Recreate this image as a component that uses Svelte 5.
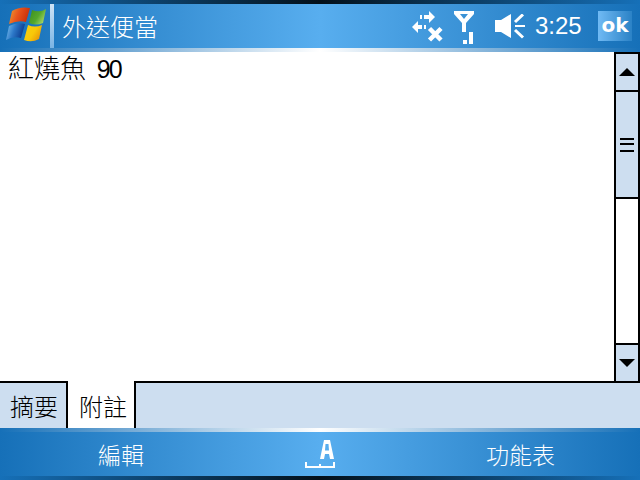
<script lang="ts">
  let note = '紅燒魚';
  let price = '90';
  let tabs = [
    { label: '摘要', active: false },
    { label: '附註', active: true }
  ];
</script>

<div class="screen">
  <header class="topbar">
    <div class="edge dark"></div>
    <div class="bar">
      <svg class="flag" width="42" height="40" viewBox="0 0 42 40">
        <defs>
          <linearGradient id="fr" x1="0" y1="0" x2="1" y2="0.3">
            <stop offset="0" stop-color="#f0a030" />
            <stop offset="0.5" stop-color="#e8541c" />
            <stop offset="1" stop-color="#c8300c" />
          </linearGradient>
          <linearGradient id="fg" x1="0" y1="0" x2="1" y2="0.6">
            <stop offset="0" stop-color="#3c8c1c" />
            <stop offset="0.6" stop-color="#54a82c" />
            <stop offset="1" stop-color="#a4d464" />
          </linearGradient>
          <linearGradient id="fb" x1="0" y1="0" x2="1" y2="0.3">
            <stop offset="0" stop-color="#80c4f0" />
            <stop offset="0.5" stop-color="#2c78c8" />
            <stop offset="1" stop-color="#0c3c90" />
          </linearGradient>
          <linearGradient id="fy" x1="0" y1="0" x2="1" y2="0.6">
            <stop offset="0" stop-color="#f8d010" />
            <stop offset="0.6" stop-color="#f8c808" />
            <stop offset="1" stop-color="#e89808" />
          </linearGradient>
        </defs>
        <path d="M6 5 Q14 0 24 2 L20 16 Q12 14 3 18 Z" fill="url(#fr)" />
        <path d="M26 4 Q34 7 40 3 L37 17 Q30 20 23 17 Z" fill="url(#fg)" />
        <path d="M3 20 Q11 16 19 18 L15 32 Q7 30 0 34 Z" fill="url(#fb)" />
        <path d="M22 19 Q29 22 36 19 L33 33 Q26 37 18 34 Z" fill="url(#fy)" />
      </svg>
      <div class="divider"></div>
      <span class="title">外送便當</span>
      <div class="status">
        <svg class="connect" width="32" height="32" viewBox="0 0 32 32">
          <g fill="#fff">
            <rect x="8" y="4" width="2" height="4" />
            <rect x="12" y="4" width="5" height="4" />
            <path d="M17 0 L23 6 L17 12 Z" />
            <path d="M0 16 L6 10 L6 22 Z" />
            <rect x="5" y="14" width="5" height="4" />
            <rect x="12" y="14" width="2" height="4" />
          </g>
          <path d="M17.500 17.500 L29 29 M29 17.500 L17.500 29" stroke="#fff" stroke-width="4.500" fill="none" />
        </svg>
        <svg class="antenna" width="20" height="34" viewBox="0 0 20 34">
          <path fill="#fff" fill-rule="evenodd" d="M0 0H20V3L12 12V21H8V12L0 3ZM6 3L10 8L14 3Z" />
          <rect x="9" y="29" width="4" height="4" fill="#fff" />
          <rect x="15" y="21" width="4" height="12" fill="#fff" />
        </svg>
        <svg class="speaker" width="30" height="26" viewBox="0 0 30 26">
          <path fill="#fff" d="M0 6H6L16 0V24L6 18H0Z" />
          <path fill="none" stroke="#fff" stroke-width="3" d="M20 8 L28 0.500 M20 16 L28 23.500" />
          <path fill="none" stroke="#fff" stroke-width="2" d="M20 12 H30" />
        </svg>
        <span class="time">3:25</span>
        <span class="ok">ok</span>
      </div>
    </div>
    <div class="edge light"></div>
  </header>

  <div class="body">
    <div class="note">{note} <span class="price">{price}</span></div>
    <div class="scrollbar">
      <div class="step up"><span class="arrow-up"></span></div>
      <div class="thumb"><span class="grip"></span></div>
      <div class="track"></div>
      <div class="step down"><span class="arrow-down"></span></div>
    </div>
  </div>

  <div class="tabs">
    {#each tabs as tab}
      <div class="tab" class:active={tab.active}>{tab.label}</div>
    {/each}
    <div class="tab-rest"></div>
  </div>

  <footer class="bottombar">
    <div class="edge light"></div>
    <div class="bar softkeys">
      <span class="key left">編輯</span>
      <svg class="sip" width="32" height="28" viewBox="0 0 32 28">
        <path fill="#fff" fill-rule="evenodd" d="M20 0H26L30 19H26L25 14H21L20 19H16ZM21.500 4L21 10.500H25L24.500 4Z" />
        <path fill="#fff" d="M1 22H3V26H15V24H17V26H29V22H31V28H1Z" />
      </svg>
      <span class="key right">功能表</span>
    </div>
    <div class="edge dark"></div>
  </footer>
</div>

<style>
  :global(body) {
    margin: 0;
    background: #fff;
  }
  .screen {
    width: 640px;
    height: 480px;
    display: flex;
    flex-direction: column;
    overflow: hidden;
    font-family: "Noto Sans CJK TC", "Liberation Sans", sans-serif;
    font-weight: 300;
  }
  .edge {
    height: 4px;
  }
  .edge.dark {
    background: linear-gradient(90deg, #1670b8, #03101a 50%, #1670b8);
  }
  .edge.light {
    background: linear-gradient(90deg, #1670b8, #ffffff 50%, #1670b8);
  }
  .bar {
    height: 44px;
    display: flex;
    align-items: center;
    background: linear-gradient(90deg, #1670b8, #58aeef 50%, #1670b8);
    color: #fff;
  }
  .flag {
    margin-left: 6px;
    flex: none;
  }
  .divider {
    width: 4px;
    height: 44px;
    margin-left: 2px;
    background: linear-gradient(180deg, #cfe4f6, #7ab4e4);
  }
  .title {
    margin-left: 8px;
    font-size: 24px;
    line-height: 44px;
  }
  .status {
    margin-left: auto;
    display: flex;
    align-items: center;
    height: 44px;
  }
  .connect {
    margin-top: 2px;
  }
  .antenna {
    margin-left: 10px;
    margin-top: 4px;
  }
  .speaker {
    margin-left: 21px;
    margin-top: 2px;
  }
  .time {
    width: 46px;
    margin-left: 10px;
    font-family: "Liberation Sans", sans-serif;
    font-size: 24px;
    font-weight: 400;
    white-space: nowrap;
  }
  .ok {
    width: 34px;
    height: 30px;
    margin: 0 8px 0 17px;
    background: linear-gradient(90deg, #70baf4, #2b82c6);
    font-family: "DejaVu Sans", sans-serif;
    font-weight: 700;
    font-size: 20px;
    line-height: 29px;
    text-align: center;
  }
  .body {
    flex: 1;
    display: flex;
    min-height: 0;
  }
  .note {
    flex: 1;
    padding: 0 8px;
    font-size: 26px;
    line-height: 30px;
    color: #000;
    background: #fff;
  }
  .price {
    margin-left: 5px;
    font-family: "Liberation Sans", sans-serif;
    font-size: 25px;
    letter-spacing: -2px;
  }
  .scrollbar {
    width: 26px;
    box-sizing: border-box;
    border: solid #000;
    border-width: 2px 2px 0 2px;
    display: flex;
    flex-direction: column;
  }
  .step {
    display: flex;
    align-items: center;
    justify-content: center;
    background: #cddef0;
  }
  .step.up {
    height: 36px;
    border-bottom: 2px solid #000;
  }
  .step.down {
    height: 36px;
    border-top: 2px solid #000;
  }
  .arrow-up {
    width: 0;
    height: 0;
    border: solid transparent;
    border-width: 0 8px 8px;
    border-bottom-color: #000;
  }
  .arrow-down {
    width: 0;
    height: 0;
    border: solid transparent;
    border-width: 8px 8px 0;
    border-top-color: #000;
  }
  .thumb {
    height: 105px;
    display: flex;
    align-items: center;
    justify-content: center;
    background: #cddef0;
    border-bottom: 2px solid #000;
  }
  .grip {
    width: 14px;
    height: 10px;
    border: solid #000;
    border-width: 2px 0;
    background: linear-gradient(#cddef0 3px, #000 3px, #000 5px, #cddef0 5px);
  }
  .track {
    flex: 1;
    background: #fff;
  }
  .tabs {
    height: 47px;
    display: flex;
    flex: none;
    font-size: 24px;
    color: #000;
  }
  .tab {
    box-sizing: border-box;
    display: flex;
    align-items: center;
    justify-content: center;
    height: 47px;
    background: #cddef0;
    border-top: 2px solid #000;
    border-right: 2px solid #000;
    width: 68px;
    padding-left: 2px;
  }
  .tab.active {
    background: #fff;
    border-top: none;
    padding-top: 2px;
    padding-left: 4px;
  }
  .tab-rest {
    flex: 1;
    background: #cddef0;
    border-top: 2px solid #000;
  }
  .bottombar {
    flex: none;
  }
  .softkeys {
    padding-left: 98px;
    font-size: 23px;
  }
  .key {
    width: 46px;
    white-space: nowrap;
  }
  .key.left {
    margin-right: 160px;
  }
  .key.right {
    margin-left: 150px;
    width: 68px;
  }
  .sip {
    flex: none;
  }
</style>
